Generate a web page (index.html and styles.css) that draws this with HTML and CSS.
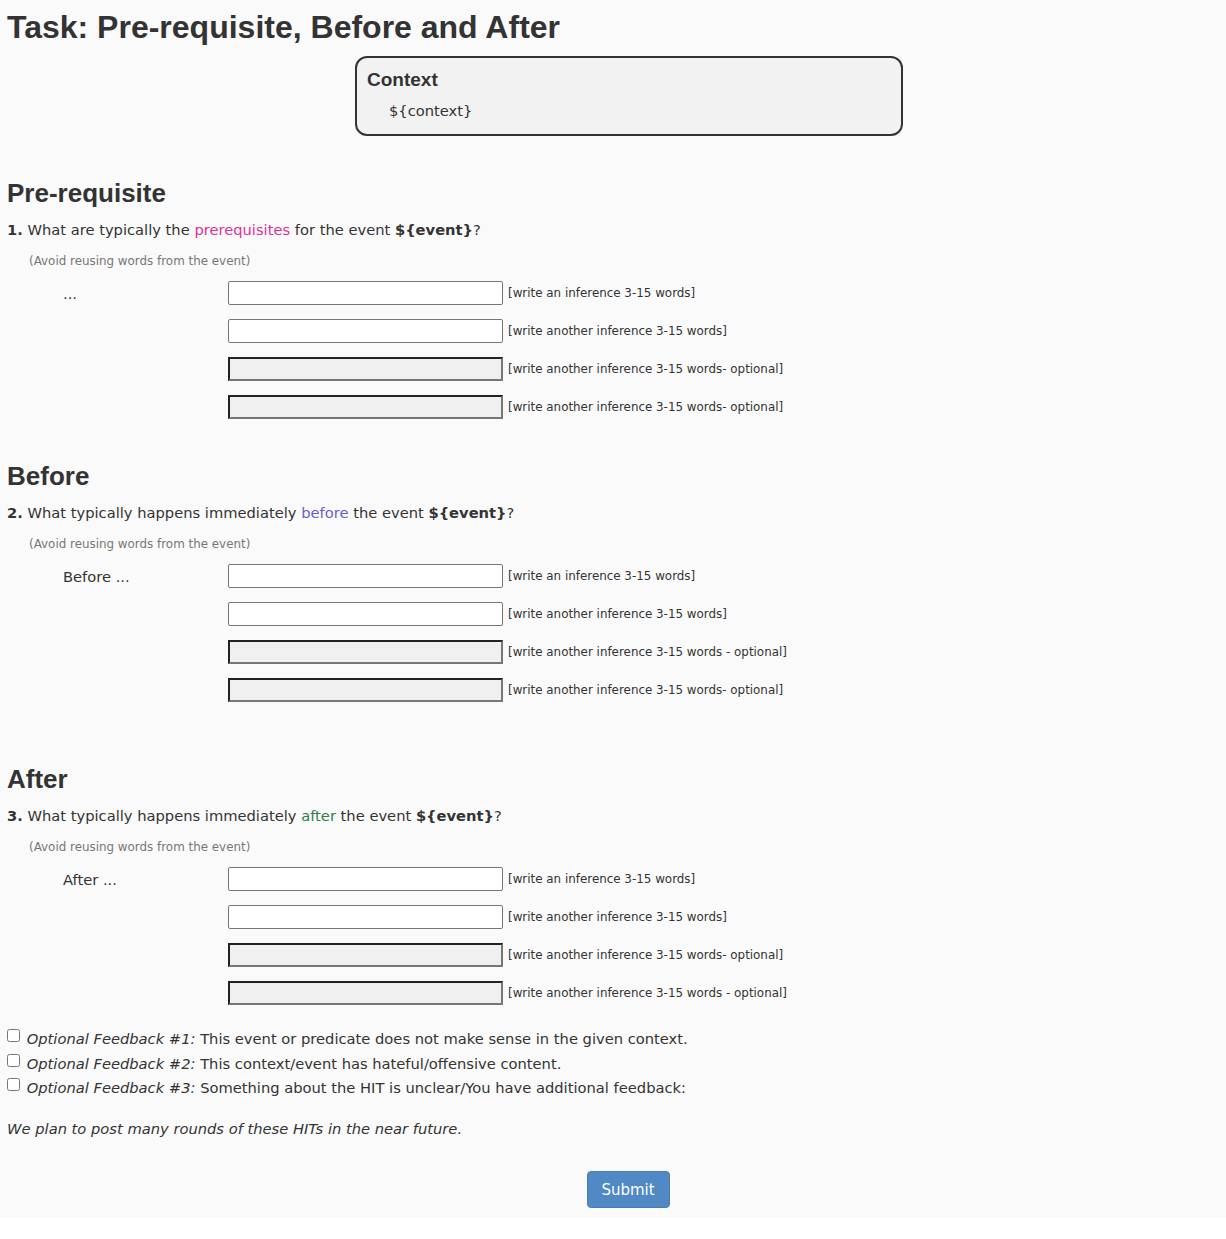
FILE: index.html
```html
<!DOCTYPE html>
<html>
<head>
<meta charset="utf-8">
<link rel="stylesheet" href="styles.css">
</head>
<body>
<div class="page">
  <h1 class="title">Task: Pre-requisite, Before and After</h1>
  <div class="context">
    <div class="context-title">Context</div>
    <div class="context-body">${context}</div>
  </div>

  <section class="section first">
    <h2 class="sec-title">Pre-requisite</h2>
    <p class="question"><b>1.</b> What are typically the <span class="c-pre">prerequisites</span> for the event <b>${event}</b>?</p>
    <p class="note">(Avoid reusing words from the event)</p>
    <div class="rows">
      <div class="row"><span class="label">...</span><input class="field" type="text"><span class="hint">[write an inference 3-15 words]</span></div>
      <div class="row"><span class="label"></span><input class="field" type="text"><span class="hint">[write another inference 3-15 words]</span></div>
      <div class="row"><span class="label"></span><input class="field opt" type="text"><span class="hint">[write another inference 3-15 words- optional]</span></div>
      <div class="row"><span class="label"></span><input class="field opt" type="text"><span class="hint">[write another inference 3-15 words- optional]</span></div>
    </div>
  </section>

  <section class="section">
    <h2 class="sec-title">Before</h2>
    <p class="question"><b>2.</b> What typically happens immediately <span class="c-before">before</span> the event <b>${event}</b>?</p>
    <p class="note">(Avoid reusing words from the event)</p>
    <div class="rows">
      <div class="row"><span class="label">Before ...</span><input class="field" type="text"><span class="hint">[write an inference 3-15 words]</span></div>
      <div class="row"><span class="label"></span><input class="field" type="text"><span class="hint">[write another inference 3-15 words]</span></div>
      <div class="row"><span class="label"></span><input class="field opt" type="text"><span class="hint">[write another inference 3-15 words - optional]</span></div>
      <div class="row"><span class="label"></span><input class="field opt" type="text"><span class="hint">[write another inference 3-15 words- optional]</span></div>
    </div>
  </section>

  <section class="section after">
    <h2 class="sec-title">After</h2>
    <p class="question"><b>3.</b> What typically happens immediately <span class="c-after">after</span> the event <b>${event}</b>?</p>
    <p class="note">(Avoid reusing words from the event)</p>
    <div class="rows">
      <div class="row"><span class="label">After ...</span><input class="field" type="text"><span class="hint">[write an inference 3-15 words]</span></div>
      <div class="row"><span class="label"></span><input class="field" type="text"><span class="hint">[write another inference 3-15 words]</span></div>
      <div class="row"><span class="label"></span><input class="field opt" type="text"><span class="hint">[write another inference 3-15 words- optional]</span></div>
      <div class="row"><span class="label"></span><input class="field opt" type="text"><span class="hint">[write another inference 3-15 words - optional]</span></div>
    </div>
  </section>

  <div class="feedback">
    <label class="fb"><input type="checkbox" class="cb"> <i>Optional Feedback #1:</i> This event or predicate does not make sense in the given context.</label>
    <label class="fb"><input type="checkbox" class="cb"> <i>Optional Feedback #2:</i> This context/event has hateful/offensive content.</label>
    <label class="fb"><input type="checkbox" class="cb"> <i>Optional Feedback #3:</i> Something about the HIT is unclear/You have additional feedback:</label>
  </div>

  <p class="plan">We plan to post many rounds of these HITs in the near future.</p>

  <div class="submit-wrap"><button class="submit" type="button">Submit</button></div>
</div>
</body>
</html>
```

FILE: styles.css
```css
html, body {
  margin: 0;
  padding: 0;
  background: #ffffff;
}
.page {
  background: #fafafa;
  color: #333333;
  font-family: "DejaVu Sans", Verdana, sans-serif;
  font-size: 14.7px;
  padding: 8px 7px 10px 7px;
  height: 1200px;
}
.title {
  font-family: "Liberation Sans", Arial, sans-serif;
  font-weight: bold;
  font-size: 32px;
  line-height: 38px;
  margin: 0;
  color: #333;
}
.context {
  margin: 10px 0 0 348px;
  width: 544px;
  height: 76px;
  border: 2px solid #333;
  border-radius: 12px;
  background: #f2f2f2;
  padding: 0;
}
.context-title {
  font-family: "Liberation Sans", Arial, sans-serif;
  font-weight: bold;
  font-size: 19px;
  padding: 10px 0 0 10px;
  line-height: 24px;
}
.context-body {
  padding: 10px 0 0 32px;
  font-size: 14.7px;
  line-height: 18px;
}
.section.first { margin-top: 42px; }
.section { margin-top: 42px; }
.section.after { margin-top: 62px; }
.sec-title {
  font-family: "Liberation Sans", Arial, sans-serif;
  font-weight: bold;
  font-size: 26px;
  line-height: 30px;
  margin: 0;
  color: #333;
}
.question {
  margin: 13px 0 0 0;
  line-height: 18px;
}
.c-pre { color: #e0309a; }
.c-before { color: #6a5ad8; }
.c-after { color: #2e7d46; }
.note {
  margin: 15px 0 0 22px;
  font-size: 11.9px;
  color: #777;
  line-height: 14px;
}
.rows {
  margin-top: 13px;
  display: flex;
  flex-direction: column;
  gap: 14px;
}
.row {
  display: flex;
  align-items: center;
  height: 24px;
}
.label {
  width: 165px;
  padding-left: 56px;
  flex: none;
}
.field {
  width: 275px;
  height: 24px;
  box-sizing: border-box;
  margin: 0;
  border: 1px solid #767676;
  border-radius: 2px;
  background: #ffffff;
  flex: none;
}
.field.opt {
  background: #f0f0f0;
  border-radius: 0;
  border-width: 2px;
  border-style: solid;
  border-color: #222 #777 #777 #222;
}
.hint {
  font-size: 11.9px;
  margin-left: 5px;
  color: #333;
}
.feedback {
  margin-top: 24px;
  display: flex;
  flex-direction: column;
  gap: 5.5px;
}
.fb {
  display: block;
  line-height: 18px;
}
.cb {
  margin: 0 2px 0 0;
  width: 13px;
  height: 13px;
  vertical-align: 2px;
}
.plan {
  margin: 23px 0 0 0;
  font-style: italic;
  line-height: 18px;
}
.submit-wrap {
  margin-top: 33px;
  display: flex;
  justify-content: center;
  padding-left: 30px;
}
.submit {
  font-family: "DejaVu Sans", Verdana, sans-serif;
  font-size: 15px;
  color: #fff;
  background: #5189c4;
  border: 1px solid #4a7db5;
  border-radius: 4px;
  width: 83px;
  height: 37px;
  padding: 0;
}
```
